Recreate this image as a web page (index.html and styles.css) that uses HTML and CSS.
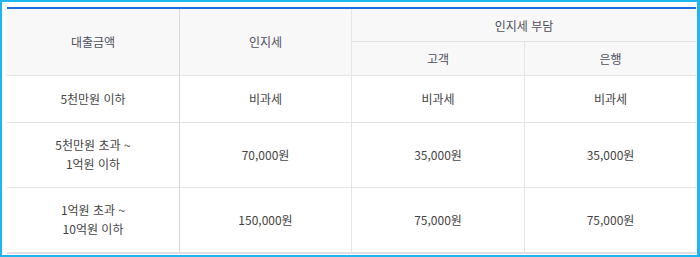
FILE: index.html
```html
<!DOCTYPE html>
<html lang="ko">
<head>
<meta charset="utf-8">
<link rel="stylesheet" href="styles.css">
</head>
<body>
<div class="frame">
  <table class="fee">
    <colgroup>
      <col class="c1"><col class="c2"><col class="c3"><col class="c4">
    </colgroup>
    <thead>
      <tr class="h1">
        <th rowspan="2" class="sep tall">대출금액</th>
        <th rowspan="2" class="vr tall">인지세</th>
        <th colspan="2">인지세 부담</th>
      </tr>
      <tr class="h2">
        <th class="vr">고객</th>
        <th>은행</th>
      </tr>
    </thead>
    <tbody>
      <tr class="b1">
        <td class="sep">5천만원 이하</td>
        <td class="vr">비과세</td>
        <td class="vr">비과세</td>
        <td>비과세</td>
      </tr>
      <tr class="b2">
        <td class="sep">5천만원 초과 ~<br>1억원 이하</td>
        <td class="vr">70,000원</td>
        <td class="vr">35,000원</td>
        <td>35,000원</td>
      </tr>
      <tr class="b3 last">
        <td class="sep">1억원 초과 ~<br>10억원 이하</td>
        <td class="vr">150,000원</td>
        <td class="vr">75,000원</td>
        <td>75,000원</td>
      </tr>
    </tbody>
  </table>
</div>
</body>
</html>
```

FILE: styles.css
```css
html, body {
  margin: 0;
  padding: 0;
  background: #ffffff;
}

.frame {
  box-sizing: border-box;
  width: 700px;
  height: 257px;
  border-style: solid;
  border-color: #1eb6ee;
  border-width: 2px 3px 2px 2px;
  padding: 5px 1px 0 5px;
  background: #ffffff;
}

.fee {
  width: 689px;
  table-layout: fixed;
  border-collapse: separate;
  border-spacing: 0;
  border-top: 2px solid #1d6fe0;
  font-family: "Noto Sans CJK KR", "Noto Sans", sans-serif;
  font-size: 12px;
  line-height: 19px;
  text-align: center;
}

.c1 { width: 173px; }
.c2 { width: 172px; }
.c3 { width: 173px; }
.c4 { width: 171px; }

.fee th,
.fee td {
  box-sizing: border-box;
  padding: 0;
  vertical-align: middle;
  border-bottom: 1px solid #e3e3e3;
}

.fee th {
  background: #f8f8f8;
  color: #4f4f5e;
  font-weight: normal;
}

.fee th.tall { padding-bottom: 1px; }

.fee td {
  background: #ffffff;
  color: #444444;
  padding-bottom: 2px;
}

.fee .vr { border-right: 1px solid #e6e6e6; }
.fee .sep { border-right: 1px solid #d8d8d8; }

.h1 th { height: 33px; }
.h2 th { height: 34px; }
.b1 td { height: 47px; }
.b2 td { height: 65px; }
.b3 td { height: 66px; }
.last td { border-bottom: 2px solid #e0e0e0; }
```
